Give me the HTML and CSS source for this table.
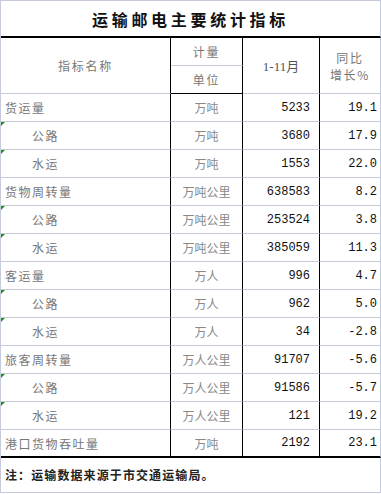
FILE: index.html
```html
<!DOCTYPE html>
<html>
  <head>
    <meta charset="utf-8" />
    <meta name="viewport" content="width=device-width, initial-scale=1.0" />
    <link rel="stylesheet" href="styles.css">
  </head>
  <body>
    <table class="stats">
      <colgroup>
        <col class="col-name" />
        <col class="col-unit" />
        <col class="col-value" />
        <col class="col-rate" />
      </colgroup>
      <tr class="title-row">
        <th colspan="4">运输邮电主要统计指标</th>
      </tr>
      <tr class="head-row">
        <th rowspan="2" class="head-name">指标名称</th>
        <th class="head-unit first">计量</th>
        <th rowspan="2" class="head-value">1-11月</th>
        <th rowspan="2" class="head-rate">同比<br />增长%</th>
      </tr>
      <tr class="head-row">
        <th class="head-unit">单位</th>
      </tr>
      <tr>
        <td class="name">货运量</td><td class="unit">万吨</td>
        <td class="num">5233</td><td class="rate">19.1</td>
      </tr>
      <tr>
        <td class="name sub">公路</td><td class="unit">万吨</td>
        <td class="num">3680</td><td class="rate">17.9</td>
      </tr>
      <tr>
        <td class="name sub">水运</td><td class="unit">万吨</td>
        <td class="num">1553</td><td class="rate">22.0</td>
      </tr>
      <tr>
        <td class="name">货物周转量</td><td class="unit">万吨公里</td>
        <td class="num">638583</td><td class="rate">8.2</td>
      </tr>
      <tr>
        <td class="name sub">公路</td><td class="unit">万吨公里</td>
        <td class="num">253524</td><td class="rate">3.8</td>
      </tr>
      <tr>
        <td class="name sub">水运</td><td class="unit">万吨公里</td>
        <td class="num">385059</td><td class="rate">11.3</td>
      </tr>
      <tr>
        <td class="name">客运量</td><td class="unit">万人</td>
        <td class="num">996</td><td class="rate">4.7</td>
      </tr>
      <tr>
        <td class="name sub">公路</td><td class="unit">万人</td>
        <td class="num">962</td><td class="rate">5.0</td>
      </tr>
      <tr>
        <td class="name sub">水运</td><td class="unit">万人</td>
        <td class="num">34</td><td class="rate">-2.8</td>
      </tr>
      <tr>
        <td class="name">旅客周转量</td><td class="unit">万人公里</td>
        <td class="num">91707</td><td class="rate">-5.6</td>
      </tr>
      <tr>
        <td class="name sub">公路</td><td class="unit">万人公里</td>
        <td class="num">91586</td><td class="rate">-5.7</td>
      </tr>
      <tr>
        <td class="name sub">水运</td><td class="unit">万人公里</td>
        <td class="num">121</td><td class="rate">19.2</td>
      </tr>
      <tr class="last-row">
        <td class="name">港口货物吞吐量</td><td class="unit">万吨</td>
        <td class="num">2192</td><td class="rate">23.1</td>
      </tr>
      <tr class="note-row">
        <td colspan="4">注：运输数据来源于市交通运输局。</td>
      </tr>
    </table>
  </body>
</html>
```

FILE: styles.css
```css
body {
  margin: 0;
  background: #fff;
  font-family: "Noto Sans CJK SC", sans-serif;
}
.stats {
  table-layout: fixed;
  width: 381px;
  border-collapse: separate;
  border-spacing: 0;
  border-left: 1px solid #c6cbdc;
  border-top: 1px solid #c6cbdc;
}
.col-name {
  width: 170px;
}
.col-unit {
  width: 72px;
}
.col-value {
  width: 77px;
}
.col-rate {
  width: 61px;
}
.stats th,
.stats td {
  padding: 0;
  font-weight: normal;
  border-right: 1px solid #000;
  border-bottom: 1px solid #c6cbdc;
  box-sizing: border-box;
}
.title-row th {
  height: 37px;
  border-right: 1px solid #c6cbdc;
  border-bottom: 2px solid #000;
  font-size: 16px;
  font-weight: bold;
  letter-spacing: 3.7px;
  color: #111;
  text-align: center;
}
.head-row th {
  height: 28px;
  font-size: 12px;
  color: #777;
  text-align: center;
  letter-spacing: 1.7px;
}
.head-name,
.head-value,
.head-rate,
.head-row th.head-unit:not(.first) {
  border-bottom: 1px solid #000;
}
.head-rate {
  line-height: 17px;
  border-right-color: #c6cbdc !important;
}
.head-value {
  font-family: "Liberation Serif", "Noto Sans CJK SC", serif;
  letter-spacing: 0 !important;
  font-size: 13px !important;
  color: #555 !important;
}
.stats td {
  height: 28px;
}
.name {
  position: relative;
  padding-left: 4px !important;
  font-size: 12px;
  letter-spacing: 1.5px;
  color: #777;
}
.name.sub {
  padding-left: 31px !important;
}
.name.sub::before {
  content: "";
  position: absolute;
  left: 0;
  top: 0;
  border-top: 4px solid #1f8f1f;
  border-right: 4px solid transparent;
}
.unit {
  text-align: center;
  font-size: 12px;
  color: #888;
}
.num,
.rate {
  text-align: right;
  font-family: "Liberation Mono", monospace;
  font-size: 12px;
  color: #111;
}
.num {
  padding-right: 9px !important;
}
.rate {
  padding-right: 3px !important;
  border-right-color: #c6cbdc !important;
}
.last-row td {
  border-bottom: 2px solid #000;
  height: 28px;
}
.note-row td {
  height: 35px;
  padding-left: 4px;
  padding-bottom: 2px;
  border-right-color: #c6cbdc;
  font-size: 12px;
  font-weight: bold;
  letter-spacing: 1.1px;
  color: #222;
}
```
